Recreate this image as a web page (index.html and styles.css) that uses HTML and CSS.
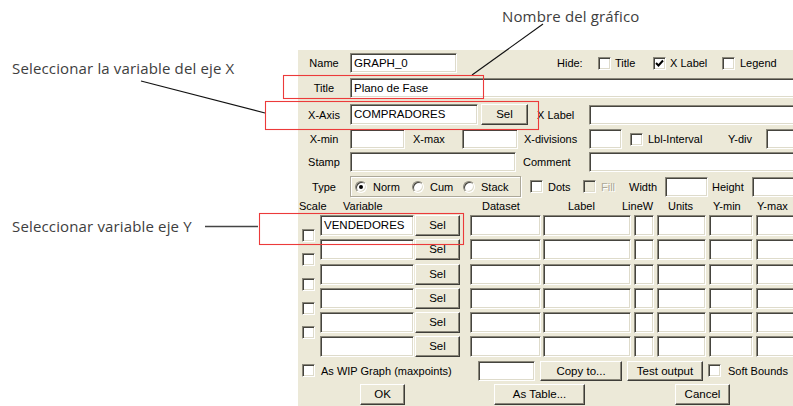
FILE: index.html
```html
<!DOCTYPE html>
<html lang="es">
<head>
    <meta charset="UTF-8">
    <meta name="viewport" content="width=device-width, initial-scale=1.0">
    <title>Graph</title>
    <link rel="stylesheet" href="styles.css">
</head>
<body>
    <div class="page">
        <div class="dlg">
            <div class="row r-name">
                <span class="lbl">Name</span>
                <div class="fld w-name">GRAPH_0</div>
                <span class="t-hide">Hide:</span>
                <span class="cb"></span>
                <span class="t-htitle">Title</span>
                <span class="cb"><svg viewBox="0 0 11 11"><path d="M2 5 L4.5 7.5 L9 2.5" /></svg></span>
                <span class="t-hxl">X Label</span>
                <span class="cb"></span>
                <span class="t-legend">Legend</span>
            </div>
            <div class="row r-title">
                <span class="lbl">Title</span>
                <div class="fld w-title">Plano de Fase</div>
            </div>
            <div class="row r-xaxis">
                <span class="lbl">X-Axis</span>
                <div class="fld w-xaxis">COMPRADORES</div>
                <div class="btn b-selx">Sel</div>
                <span class="t-xlabel">X Label</span>
                <div class="fld w-xlabel"></div>
            </div>
            <div class="row r-xmin">
                <span class="lbl">X-min</span>
                <div class="fld w-xmin"></div>
                <span class="t-xmax">X-max</span>
                <div class="fld w-xmax"></div>
                <span class="t-xdiv">X-divisions</span>
                <div class="fld w-xdiv"></div>
                <span class="cb cb-lbl"></span>
                <span class="t-lbl">Lbl-Interval</span>
                <span class="t-ydiv">Y-div</span>
                <div class="fld w-ydiv"></div>
            </div>
            <div class="row r-stamp">
                <span class="lbl">Stamp</span>
                <div class="fld w-stamp"></div>
                <span class="t-comment">Comment</span>
                <div class="fld w-comment"></div>
            </div>
            <div class="row r-type">
                <span class="lbl">Type</span>
                <div class="grp">
                    <span class="opt opt-norm"><span class="rad on"></span>Norm</span>
                    <span class="opt opt-cum"><span class="rad"></span>Cum</span>
                    <span class="opt"><span class="rad"></span>Stack</span>
                </div>
                <span class="cb cb-dots"></span>
                <span class="t-dots">Dots</span>
                <span class="cb off"></span>
                <span class="t-fill">Fill</span>
                <span class="t-width">Width</span>
                <div class="fld w-width"></div>
                <span class="t-height">Height</span>
                <div class="fld w-height"></div>
            </div>
            <div class="row hd">
                <span class="h-scale">Scale</span>
                <span class="h-var">Variable</span>
                <span class="h-ds">Dataset</span>
                <span class="h-lab">Label</span>
                <span class="h-lw">LineW</span>
                <span class="h-un">Units</span>
                <span class="h-ymin">Y-min</span>
                <span class="h-ymax">Y-max</span>
            </div>
            <div class="tbl">
                <div class="scale-col">
                    <span class="cb"></span>
                    <span class="cb"></span>
                    <span class="cb"></span>
                    <span class="cb"></span>
                    <span class="cb"></span>
                </div>
                <div class="var-rows">
                    <div class="vrow">
                        <div class="fld f-var">VENDEDORES</div><div class="btn sel">Sel</div>
                        <div class="fld f-ds"></div><div class="fld f-lab"></div><div class="fld f-lw"></div>
                        <div class="fld f-un"></div><div class="fld f-ymin"></div><div class="fld f-ymax"></div>
                    </div>
                    <div class="vrow">
                        <div class="fld f-var"></div><div class="btn sel">Sel</div>
                        <div class="fld f-ds"></div><div class="fld f-lab"></div><div class="fld f-lw"></div>
                        <div class="fld f-un"></div><div class="fld f-ymin"></div><div class="fld f-ymax"></div>
                    </div>
                    <div class="vrow">
                        <div class="fld f-var"></div><div class="btn sel">Sel</div>
                        <div class="fld f-ds"></div><div class="fld f-lab"></div><div class="fld f-lw"></div>
                        <div class="fld f-un"></div><div class="fld f-ymin"></div><div class="fld f-ymax"></div>
                    </div>
                    <div class="vrow">
                        <div class="fld f-var"></div><div class="btn sel">Sel</div>
                        <div class="fld f-ds"></div><div class="fld f-lab"></div><div class="fld f-lw"></div>
                        <div class="fld f-un"></div><div class="fld f-ymin"></div><div class="fld f-ymax"></div>
                    </div>
                    <div class="vrow">
                        <div class="fld f-var"></div><div class="btn sel">Sel</div>
                        <div class="fld f-ds"></div><div class="fld f-lab"></div><div class="fld f-lw"></div>
                        <div class="fld f-un"></div><div class="fld f-ymin"></div><div class="fld f-ymax"></div>
                    </div>
                    <div class="vrow">
                        <div class="fld f-var"></div><div class="btn sel">Sel</div>
                        <div class="fld f-ds"></div><div class="fld f-lab"></div><div class="fld f-lw"></div>
                        <div class="fld f-un"></div><div class="fld f-ymin"></div><div class="fld f-ymax"></div>
                    </div>
                </div>
            </div>
            <div class="row r-wip">
                <span class="cb cb-wip"></span>
                <span class="t-wip">As WIP Graph (maxpoints)</span>
                <div class="fld w-wip"></div>
                <div class="btn b-copy">Copy to...</div>
                <div class="btn b-test">Test output</div>
                <span class="cb cb-soft"></span>
                <span class="t-soft">Soft Bounds</span>
            </div>
            <div class="row r-ok">
                <div class="btn b-ok">OK</div>
                <div class="btn b-table">As Table...</div>
                <div class="btn b-cancel">Cancel</div>
            </div>
        </div>

        <svg class="marks" width="793" height="406">
            <line x1="141" y1="81" x2="265" y2="113" stroke="#111" stroke-width="1.1" />
            <line x1="543" y1="24" x2="472" y2="75" stroke="#111" stroke-width="1.1" />
            <line x1="205" y1="226.5" x2="258" y2="226.5" stroke="#444" stroke-width="1.5" />
            <rect x="283.5" y="75.5" width="200" height="23" />
            <rect x="265.5" y="101.5" width="273" height="28" />
            <rect x="259.5" y="213.5" width="204" height="31" />
        </svg>
        <div class="note note-x">Seleccionar la variable del eje X</div>
        <div class="note note-t">Nombre del gráfico</div>
        <div class="note note-y">Seleccionar variable eje Y</div>
    </div>
</body>
</html>
```

FILE: styles.css
```css
body {
    margin: 0;
    background: #fff;
}
.page {
    position: relative;
    width: 793px;
    height: 406px;
    overflow: hidden;
    padding: 50px 0 0 298px;
    box-sizing: border-box;
    font-family: "Liberation Sans", Arial, sans-serif;
    font-size: 11px;
    color: #000;
}
.dlg {
    width: 495px;
    height: 356px;
    background: #ece9d8;
    overflow: hidden;
    display: flex;
    flex-direction: column;
}
.row {
    display: flex;
    align-items: center;
    height: 20px;
    flex-shrink: 0;
    white-space: nowrap;
}
.row > *, .vrow > *, .tbl > * {
    flex-shrink: 0;
}
.lbl {
    width: 52px;
    text-align: center;
}

/* sunken edit box */
.fld {
    height: 20px;
    box-sizing: border-box;
    background: #fff;
    border: 1px solid;
    border-color: #8a877a #fff #fff #8a877a;
    box-shadow: inset 1px 1px 0 #45443e, inset -1px -1px 0 #dedbcb;
    padding: 0 3px;
    font-size: 11.5px;
    line-height: 18px;
    white-space: nowrap;
    overflow: hidden;
}
.btn {
    height: 21px;
    box-sizing: border-box;
    background: #ece9d8;
    border: 1px solid;
    border-color: #fff #3e3d38 #3e3d38 #fff;
    box-shadow: inset -1px -1px 0 #8a877a;
    text-align: center;
    line-height: 19px;
    font-size: 11.5px;
}
.cb {
    width: 13px;
    height: 13px;
    box-sizing: border-box;
    background: #fff;
    border: 1px solid;
    border-color: #8a877a #fff #fff #8a877a;
    box-shadow: inset 1px 1px 0 #45443e, inset -1px -1px 0 #dedbcb;
    display: inline-flex;
    align-items: center;
    justify-content: center;
}
.cb svg {
    width: 11px;
    height: 11px;
    fill: none;
    stroke: #000;
    stroke-width: 2;
}
.cb.off {
    background: #ece9d8;
}
.rad {
    width: 12px;
    height: 12px;
    box-sizing: border-box;
    border-radius: 50%;
    background: #fff;
    border: 1px solid;
    border-color: #8a877a #fff #fff #8a877a;
    box-shadow: inset 1px 1px 0 #45443e, inset -1px -1px 0 #dedbcb;
    margin-right: 6px;
    position: relative;
}
.rad.on::after {
    content: "";
    position: absolute;
    left: 3px;
    top: 3px;
    width: 4px;
    height: 4px;
    border-radius: 50%;
    background: #000;
}

/* Name row */
.r-name { margin-top: 3px; }
.w-name { width: 107px; }
.t-hide { margin-left: 100px; width: 41px; }
.t-htitle { margin-left: 4px; width: 38px; }
.t-hxl { margin-left: 4px; width: 52px; }
.t-legend { margin-left: 5px; }

/* Title row */
.r-title { margin-top: 5px; }
.w-title { width: 450px; }

/* X-Axis row */
.r-xaxis { margin-top: 6px; height: 21px; }
.w-xaxis { width: 128px; height: 21px; }
.b-selx { margin-left: 3px; width: 47px; }
.t-xlabel { margin-left: 9px; width: 52px; }
.w-xlabel { width: 210px; }

/* X-min row */
.r-xmin { margin-top: 4px; }
.w-xmin { width: 55px; }
.t-xmax { margin-left: 8px; width: 49px; }
.w-xmax { width: 56px; }
.t-xdiv { margin-left: 6px; width: 65px; }
.w-xdiv { width: 33px; }
.cb-lbl { margin-left: 8px; }
.t-lbl { margin-left: 5px; width: 80px; }
.t-ydiv { width: 38px; }
.w-ydiv { width: 40px; }

/* Stamp row */
.r-stamp { margin-top: 3px; }
.w-stamp { width: 166px; }
.t-comment { margin-left: 7px; width: 66px; }
.w-comment { width: 210px; }

/* Type row */
.r-type { margin-top: 4px; height: 21px; }
.grp {
    width: 171px;
    height: 21px;
    box-sizing: border-box;
    border: 1px solid #aca899;
    box-shadow: inset 1px 1px 0 #fff, 1px 1px 0 #fff;
    display: flex;
    align-items: center;
    padding-left: 4px;
}
.opt {
    display: flex;
    align-items: center;
}
.opt-norm { width: 57px; }
.opt-cum { width: 51px; }
.cb-dots { margin-left: 9px; }
.t-dots { margin-left: 5px; width: 35px; }
.t-fill {
    margin-left: 5px;
    width: 28px;
    color: #aca899;
    text-shadow: 1px 1px 0 #fff;
}
.t-width { width: 36px; }
.w-width { width: 43px; }
.t-height { margin-left: 4px; width: 40px; }
.w-height { width: 50px; }

/* column headers */
.hd { margin-top: 2px; height: 14px; }
.h-scale { margin-left: 1px; width: 44px; }
.h-var { width: 139px; }
.h-ds { width: 86px; }
.h-lab { width: 54px; }
.h-lw { width: 46px; }
.h-un { width: 45px; }
.h-ymin { width: 44px; }

/* variables table */
.tbl {
    display: flex;
    margin-top: 2px;
    flex-shrink: 0;
}
.scale-col {
    width: 22px;
    box-sizing: border-box;
    padding: 14px 0 0 4px;
    display: flex;
    flex-direction: column;
    gap: 11.3px;
}
.var-rows {
    display: flex;
    flex-direction: column;
    gap: 3.3px;
}
.vrow {
    display: flex;
    height: 21px;
}
.vrow .fld { height: 21px; }
.f-var { width: 94px; }
.sel { margin-left: 1px; width: 45px; }
.f-ds { margin-left: 10px; width: 71px; }
.f-lab { margin-left: 2px; width: 88px; }
.f-lw { margin-left: 3px; width: 20px; }
.f-un { margin-left: 3px; width: 49px; }
.f-ymin { margin-left: 3px; width: 44px; }
.f-ymax { margin-left: 3px; width: 50px; }

/* bottom rows */
.r-wip { margin-top: 3.5px; }
.cb-wip { margin-left: 4px; }
.t-wip { margin-left: 6px; width: 157px; }
.w-wip { width: 57px; }
.b-copy { margin-left: 5px; width: 82px; height: 20px; line-height: 18px; }
.b-test { margin-left: 5px; width: 76px; height: 20px; line-height: 18px; }
.cb-soft { margin-left: 5px; }
.t-soft { margin-left: 7px; }

.r-ok { margin-top: 3px; height: 21px; }
.b-ok { margin-left: 62px; width: 45px; }
.b-table { margin-left: 89px; width: 91px; }
.b-cancel { margin-left: 90px; width: 55px; }

/* annotations over the screenshot */
.marks {
    position: absolute;
    left: 0;
    top: 0;
}
.marks rect {
    fill: none;
    stroke: #ec3a3a;
    stroke-width: 1.1;
}
.note {
    position: absolute;
    font-family: "Open Sans", Lato, sans-serif;
    font-size: 15px;
    line-height: 19px;
    letter-spacing: 0.15px;
    color: #3e3e3e;
    white-space: nowrap;
}
.note-x { left: 12px; top: 59px; }
.note-t { left: 502px; top: 7px; }
.note-y { left: 12px; top: 217px; }
```
